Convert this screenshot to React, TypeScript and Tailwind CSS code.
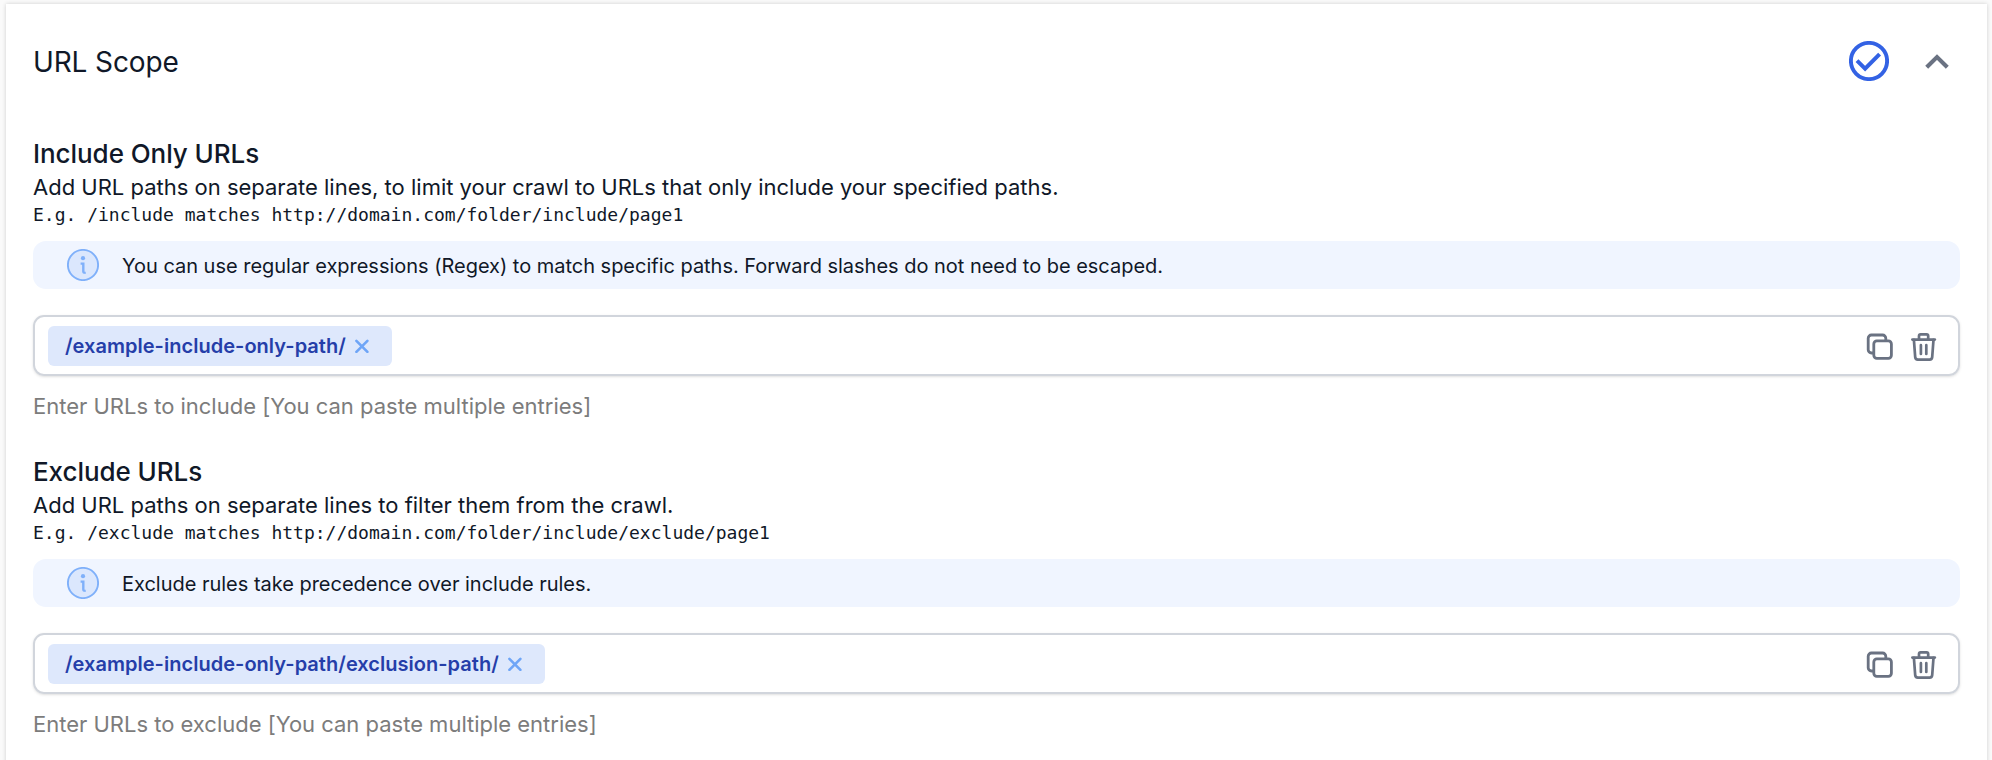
import React from "react";

function CheckCircle() {
  return (
    <svg className="h-10 w-10 text-[#3362e4]" viewBox="0 0 40 40" fill="none" stroke="currentColor">
      <circle cx="20" cy="20" r="18.1" strokeWidth="3.9" />
      <path d="M8 19.7l8.1 8L30.6 13.1" strokeWidth="4" />
    </svg>
  );
}

function ChevronUp() {
  return (
    <svg className="h-10 w-10 text-gray-500" viewBox="0 0 40 40" fill="none" stroke="currentColor">
      <path d="M9.7 26.2L20 16.1l10.3 10.1" strokeWidth="4.2" />
    </svg>
  );
}

function InfoIcon() {
  return (
    <svg className="h-8 w-8" viewBox="0 0 32 32" fill="none">
      <circle cx="16" cy="16" r="15.1" fill="#dbe7fd" stroke="#7fb0fa" strokeWidth="1.9" />
      <circle cx="16" cy="9.2" r="2.1" fill="#7fb0fa" />
      <path d="M13.6 14.6h2.7v8q0 1.3 2.4 1.3" stroke="#7fb0fa" strokeWidth="2.4" />
    </svg>
  );
}

function CopyIcon() {
  return (
    <svg className="h-8 w-8 text-gray-500" viewBox="0 0 32 32" fill="none" stroke="currentColor" strokeWidth="2.8">
      <rect x="9.8" y="9.9" width="17.6" height="17.4" rx="3" />
      <path d="M10 22H7.4a3.2 3.2 0 0 1-3.2-3.2V7.2A3.2 3.2 0 0 1 7.4 4h11.2a3.2 3.2 0 0 1 3.2 3.2V10" />
    </svg>
  );
}

function TrashIcon() {
  return (
    <svg className="h-8 w-8 text-gray-500" viewBox="0 0 32 32" fill="none" stroke="currentColor" strokeWidth="2.7" strokeLinecap="round" strokeLinejoin="round">
      <path d="M4.4 8.6h22.4" />
      <path d="M5.9 8.9l1.3 17.3a2.6 2.6 0 0 0 2.6 2.4h11.8a2.6 2.6 0 0 0 2.6-2.4l1.3-17.3" />
      <path d="M11 8.2V5a1.6 1.6 0 0 1 1.6-1.6h6A1.6 1.6 0 0 1 20.2 5v3.2" />
      <path d="M12.9 14.2v8.8M18.3 14.2v8.8" />
    </svg>
  );
}

function CloseIcon() {
  return (
    <svg className="h-[14px] w-[14px] text-[#6ea5f7]" viewBox="0 0 14 14" fill="none" stroke="currentColor" strokeWidth="2.6" strokeLinecap="round">
      <path d="M1.4 1.8l11 11M12.4 1.8l-11 11" />
    </svg>
  );
}

type ScopeProps = {
  title: string;
  description: string;
  example: string;
  hint: string;
  tag: string;
  helper: string;
};

function ScopeSection({ title, description, example, hint, tag, helper }: ScopeProps) {
  return (
    <section className="flex h-[318px] flex-col">
      <h3 className="h-9 pt-px text-[26px] leading-9 font-medium tracking-[-0.06px]">{title}</h3>
      <p className="h-8 text-[22px] leading-8">{description}</p>
      <p className="h-6 font-['DejaVu_Sans_Mono',monospace] text-[18px] leading-6">{example}</p>
      <div className="mt-[14px] flex h-[47.5px] items-center rounded-[13px] bg-[#f0f5ff] pl-[34px]">
        <InfoIcon />
        <span className="ml-[23px] pt-[3px] text-[20px] leading-7 tracking-[-0.02px]">{hint}</span>
      </div>
      <div className="mt-[26.5px] flex h-[61px] shrink-0 items-center rounded-[11px] border-2 border-gray-300 pr-[18px] pl-[13px] shadow-sm">
        <span className="flex h-10 items-center rounded-md bg-[#dee8fc] pr-[23px] pl-[17px] text-[20px] font-semibold tracking-[0.03px] text-[#253ea9]">
          {tag}
          <span className="ml-[9px]">
            <CloseIcon />
          </span>
        </span>
        <span className="ml-auto flex gap-3 pt-[2px]">
          <CopyIcon />
          <TrashIcon />
        </span>
      </div>
      <p className="mt-[14px] text-[22px] leading-8 tracking-[-0.01px] text-[#7c7c7c]">{helper}</p>
    </section>
  );
}

export default function App() {
  return (
    <div className="h-[760px] overflow-hidden bg-[#fafafa] pt-1 pr-[5px] pl-[6px] font-[Inter,sans-serif] text-gray-900">
      <main className="h-[800px] bg-white px-[27px] shadow-[0_0_4px_rgba(0,0,0,0.18)]">
        <header className="flex h-[115px] items-center justify-between">
          <h2 className="text-[28px] leading-9 tracking-[-0.12px]">URL Scope</h2>
          <div className="flex items-center gap-7 pr-[3px] pb-px">
            <CheckCircle />
            <ChevronUp />
          </div>
        </header>
        <div className="pt-4">
          <ScopeSection
            title="Include Only URLs"
            description="Add URL paths on separate lines, to limit your crawl to URLs that only include your specified paths."
            example="E.g. /include matches http://domain.com/folder/include/page1"
            hint="You can use regular expressions (Regex) to match specific paths. Forward slashes do not need to be escaped."
            tag="/example-include-only-path/"
            helper="Enter URLs to include [You can paste multiple entries]"
          />
          <ScopeSection
            title="Exclude URLs"
            description="Add URL paths on separate lines to filter them from the crawl."
            example="E.g. /exclude matches http://domain.com/folder/include/exclude/page1"
            hint="Exclude rules take precedence over include rules."
            tag="/example-include-only-path/exclusion-path/"
            helper="Enter URLs to exclude [You can paste multiple entries]"
          />
        </div>
      </main>
    </div>
  );
}
